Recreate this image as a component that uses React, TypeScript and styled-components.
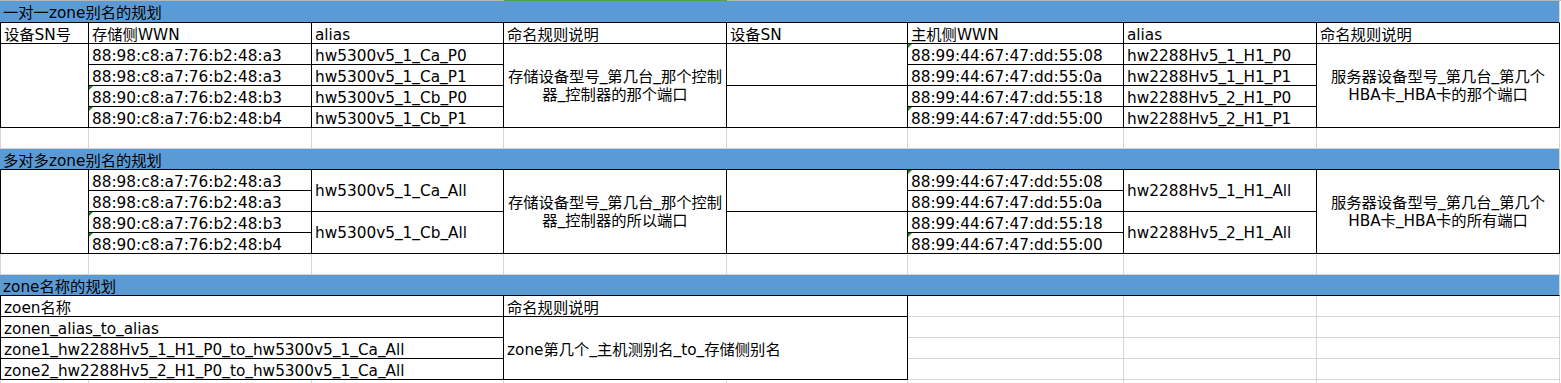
import React from 'react';
import styled, { createGlobalStyle, css } from 'styled-components';

const BLACK = '#000000';
const GRID = '#d6d6d6';
const BLUE = '#5b9bd5';
const MARK = '#1a8c1a';

const GlobalStyle = createGlobalStyle`
  html, body { margin: 0; padding: 0; background: #ffffff; overflow: hidden; }
  body { font-family: "DejaVu Sans", "Noto Sans CJK SC", sans-serif; }
`;

const Sheet = styled.div`
  display: grid;
  grid-template-columns: 89px 223px 192px 223px 181px 216px 193px 243px 1px;
  grid-template-rows: 1px 22px repeat(18, 21px);
  width: 1561px;
  font-family: "DejaVu Sans", "Noto Sans CJK SC", sans-serif;
  font-size: 15.3px;
  color: #000;
`;

const ColumnEdge = styled.div<{ $c: number; $active?: boolean }>`
  grid-column: ${p => p.$c};
  grid-row: 1;
  background: ${p => (p.$active ? '#4da64d' : '#b8b8b8')};
`;

type CellProps = {
  $c: number;
  $r: number;
  $cs?: number;
  $rs?: number;
  $right?: string;
  $bottom?: string;
  $left?: string;
  $fill?: string;
  $v?: 'bottom' | 'middle';
  $h?: 'left' | 'center';
  $pt?: number;
};

const Cell = styled.div<CellProps>`
  grid-column: ${p => p.$c} / span ${p => p.$cs ?? 1};
  grid-row: ${p => p.$r + 1} / span ${p => p.$rs ?? 1};
  position: relative;
  box-sizing: border-box;
  min-width: 0;
  border-right: 1px solid ${p => p.$right ?? GRID};
  border-bottom: 1px solid ${p => p.$bottom ?? GRID};
  border-left: ${p => (p.$left ? `1px solid ${p.$left}` : 'none')};
  background: ${p => p.$fill ?? '#ffffff'};
  overflow: hidden;
  white-space: nowrap;
  padding-left: 3px;
  padding-right: 3px;
  display: flex;
  flex-direction: column;
  align-items: ${p => (p.$h === 'center' ? 'center' : 'flex-start')};
  text-align: ${p => (p.$h === 'center' ? 'center' : 'left')};
  ${p =>
    p.$v === 'middle'
      ? css`
          justify-content: center;
          line-height: 18px;
          padding-top: ${p.$pt ?? 0}px;
        `
      : css`
          justify-content: flex-start;
          line-height: 20px;
          padding-top: ${p.$pt ?? 2}px;
        `}
`;

const Line = styled.span`
  display: block;
  line-height: 18px;
`;

const Underscore = styled.span`
  position: relative;
  top: -2px;
`;

const Mark = styled.span`
  position: absolute;
  top: 0;
  left: 0;
  width: 0;
  height: 0;
  border-top: 4px solid ${MARK};
  border-right: 4px solid transparent;
`;

const T: React.FC<{ s: string }> = ({ s }) => (
  <>
    {s.split(/(_)/).map((part, i) =>
      part === '_' ? <Underscore key={i}>_</Underscore> : <React.Fragment key={i}>{part}</React.Fragment>
    )}
  </>
);

const storageWWN = [
  { v: '88:98:c8:a7:76:b2:48:a3', m: false },
  { v: '88:98:c8:a7:76:b2:48:a3', m: false },
  { v: '88:90:c8:a7:76:b2:48:b3', m: true },
  { v: '88:90:c8:a7:76:b2:48:b4', m: true },
];
const hostWWN = [
  { v: '88:99:44:67:47:dd:55:08', m: true },
  { v: '88:99:44:67:47:dd:55:0a', m: false },
  { v: '88:99:44:67:47:dd:55:18', m: false },
  { v: '88:99:44:67:47:dd:55:00', m: true },
];
const storageAlias = ['hw5300v5_1_Ca_P0', 'hw5300v5_1_Ca_P1', 'hw5300v5_1_Cb_P0', 'hw5300v5_1_Cb_P1'];
const hostAlias = ['hw2288Hv5_1_H1_P0', 'hw2288Hv5_1_H1_P1', 'hw2288Hv5_2_H1_P0', 'hw2288Hv5_2_H1_P1'];
const headers = ['设备SN号', '存储侧WWN', 'alias', '命名规则说明', '设备SN', '主机侧WWN', 'alias', '命名规则说明'];
const zones = [
  'zonen_alias_to_alias',
  'zone1_hw2288Hv5_1_H1_P0_to_hw5300v5_1_Ca_All',
  'zone2_hw2288Hv5_2_H1_P0_to_hw5300v5_1_Ca_All',
];

const EmptyRow: React.FC<{ r: number }> = ({ r }) => (
  <>
    {[1, 2, 3, 4, 5, 6, 7, 8].map(c => (
      <Cell key={c} $c={c} $r={r} $left={c === 1 ? GRID : undefined} />
    ))}
  </>
);

const Banner: React.FC<{ r: number; text: string }> = ({ r, text }) => (
  <Cell $c={1} $r={r} $cs={8} $fill={BLUE} $bottom={BLACK} $right={GRID} $pt={2}>
    <span>{text}</span>
  </Cell>
);

const WWNColumn: React.FC<{ c: number; start: number; items: { v: string; m: boolean }[] }> = ({ c, start, items }) => (
  <>
    {items.map((it, i) => (
      <Cell key={i} $c={c} $r={start + i} $right={BLACK} $bottom={BLACK}>
        {it.m && <Mark />}
        <span>{it.v}</span>
      </Cell>
    ))}
  </>
);

const TextColumn: React.FC<{ c: number; start: number; items: string[] }> = ({ c, start, items }) => (
  <>
    {items.map((a, i) => (
      <Cell key={a} $c={c} $r={start + i} $right={BLACK} $bottom={BLACK}>
        <span>
          <T s={a} />
        </span>
      </Cell>
    ))}
  </>
);

const RuleCell: React.FC<{ c: number; r: number; lines: string[] }> = ({ c, r, lines }) => (
  <Cell $c={c} $r={r} $rs={4} $right={BLACK} $bottom={BLACK} $v="middle" $h="center">
    {lines.map(l => (
      <Line key={l}>
        <T s={l} />
      </Line>
    ))}
  </Cell>
);

const MergedAlias: React.FC<{ c: number; r: number; text: string }> = ({ c, r, text }) => (
  <Cell $c={c} $r={r} $rs={2} $right={BLACK} $bottom={BLACK} $v="middle">
    <Line>
      <T s={text} />
    </Line>
  </Cell>
);

export default function App() {
  return (
    <>
      <GlobalStyle />
      <Sheet>
        {[1, 2, 3, 4, 5, 6, 7, 8, 9].map(c => (
          <ColumnEdge key={c} $c={c} $active={c === 4} />
        ))}

        {/* Section 1 */}
        <Banner r={1} text="一对一zone别名的规划" />
        {headers.map((h, i) => (
          <Cell key={h + i} $c={i + 1} $r={2} $right={BLACK} $bottom={BLACK} $left={i === 0 ? BLACK : undefined}>
            <span>{h}</span>
          </Cell>
        ))}
        <Cell $c={1} $r={3} $rs={4} $left={BLACK} $right={BLACK} $bottom={BLACK} />
        <WWNColumn c={2} start={3} items={storageWWN} />
        <TextColumn c={3} start={3} items={storageAlias} />
        <RuleCell c={4} r={3} lines={['存储设备型号_第几台_那个控制', '器_控制器的那个端口']} />
        <Cell $c={5} $r={3} $rs={2} $right={BLACK} $bottom={BLACK} />
        <Cell $c={5} $r={5} $rs={2} $right={BLACK} $bottom={BLACK} />
        <WWNColumn c={6} start={3} items={hostWWN} />
        <TextColumn c={7} start={3} items={hostAlias} />
        <RuleCell c={8} r={3} lines={['服务器设备型号_第几台_第几个', 'HBA卡_HBA卡的那个端口']} />

        <EmptyRow r={7} />

        {/* Section 2 */}
        <Banner r={8} text="多对多zone别名的规划" />
        <Cell $c={1} $r={9} $rs={4} $left={BLACK} $right={BLACK} $bottom={BLACK} />
        <WWNColumn c={2} start={9} items={storageWWN} />
        <MergedAlias c={3} r={9} text="hw5300v5_1_Ca_All" />
        <MergedAlias c={3} r={11} text="hw5300v5_1_Cb_All" />
        <RuleCell c={4} r={9} lines={['存储设备型号_第几台_那个控制', '器_控制器的所以端口']} />
        <Cell $c={5} $r={9} $rs={2} $right={BLACK} $bottom={BLACK} />
        <Cell $c={5} $r={11} $rs={2} $right={BLACK} $bottom={BLACK} />
        <WWNColumn c={6} start={9} items={hostWWN} />
        <MergedAlias c={7} r={9} text="hw2288Hv5_1_H1_All" />
        <MergedAlias c={7} r={11} text="hw2288Hv5_2_H1_All" />
        <RuleCell c={8} r={9} lines={['服务器设备型号_第几台_第几个', 'HBA卡_HBA卡的所有端口']} />

        <EmptyRow r={13} />

        {/* Section 3 */}
        <Banner r={14} text="zone名称的规划" />
        <Cell $c={1} $r={15} $cs={3} $left={BLACK} $right={BLACK} $bottom={BLACK}>
          <span>zoen名称</span>
        </Cell>
        <Cell $c={4} $r={15} $cs={2} $right={BLACK} $bottom={BLACK}>
          <span>命名规则说明</span>
        </Cell>
        {zones.map((z, i) => (
          <Cell key={z} $c={1} $r={16 + i} $cs={3} $left={BLACK} $right={BLACK} $bottom={BLACK}>
            <span>
              <T s={z} />
            </span>
          </Cell>
        ))}
        <Cell $c={4} $r={16} $cs={2} $rs={3} $right={BLACK} $bottom={BLACK} $v="middle" $pt={3}>
          <Line>
            <T s="zone第几个_主机测别名_to_存储侧别名" />
          </Line>
        </Cell>
        {[15, 16, 17, 18].map(r =>
          [6, 7, 8].map(c => <Cell key={`${r}-${c}`} $c={c} $r={r} />)
        )}

        <EmptyRow r={19} />
      </Sheet>
    </>
  );
}
